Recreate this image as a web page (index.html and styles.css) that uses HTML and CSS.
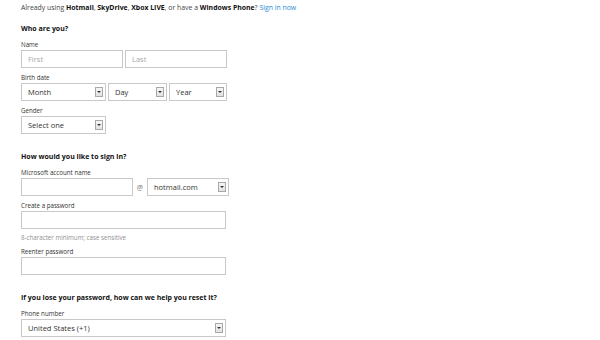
FILE: index.html
```html
<!DOCTYPE html>
<html lang="en">
<head>
    <meta charset="UTF-8">
    <title>Create an account</title>
    <link rel="stylesheet" href="styles.css">
</head>
<body>

    <p class="intro">Already using <b>Hotmail</b>, <b>SkyDrive</b>, <b>Xbox LIVE</b>, or have a <b>Windows Phone</b>? <a href="#">Sign in now</a></p>

    <!-- Who are you -->
    <section class="group">
        <h2>Who are you?</h2>
        <div class="field">
            <label>Name</label>
            <div class="row">
                <div class="input w101 placeholder">First</div>
                <div class="input w101 placeholder">Last</div>
            </div>
        </div>
        <div class="field">
            <label>Birth date</label>
            <div class="row">
                <div class="select w84">Month<span class="arrow"></span></div>
                <div class="select w58">Day<span class="arrow"></span></div>
                <div class="select w57">Year<span class="arrow"></span></div>
            </div>
        </div>
        <div class="field">
            <label>Gender</label>
            <div class="select w84">Select one<span class="arrow"></span></div>
        </div>
    </section>

    <!-- Sign in -->
    <section class="group">
        <h2>How would you like to sign in?</h2>
        <div class="field">
            <label>Microsoft account name</label>
            <div class="row">
                <div class="input w111"></div>
                <span class="at">@</span>
                <div class="select w81">hotmail.com<span class="arrow"></span></div>
            </div>
        </div>
        <div class="field">
            <label>Create a password</label>
            <div class="input wide"></div>
            <p class="hint">8-character minimum; case sensitive</p>
        </div>
        <div class="field">
            <label>Reenter password</label>
            <div class="input wide"></div>
        </div>
    </section>

    <!-- Reset -->
    <section class="group">
        <h2>If you lose your password, how can we help you reset it?</h2>
        <div class="field">
            <label>Phone number</label>
            <div class="select wide">United States (+1)<span class="arrow"></span></div>
        </div>
    </section>

</body>
</html>
```

FILE: styles.css
```css
body {
    margin: 0;
    padding: 3px 0 0 21px;
    font-family: "Open Sans", sans-serif;
    color: #222;
    background: #fff;
}
.intro {
    margin: 0;
    font-size: 6.9px;
    line-height: 10px;
    color: #444;
}
.intro b {
    color: #111;
}
.intro a {
    color: #2a8ad4;
    text-decoration: none;
}
.group {
    margin-top: 11px;
}
.group + .group {
    margin-top: 18px;
}
h2 {
    margin: 0 0 6px;
    font-size: 7px;
    line-height: 10px;
    font-weight: bold;
    color: #111;
}
.field {
    margin-bottom: 5px;
}
label {
    display: block;
    font-size: 6.2px;
    line-height: 9px;
    color: #333;
    margin-bottom: 1px;
}
.row {
    display: flex;
    align-items: center;
    gap: 2px;
}
.input, .select {
    box-sizing: border-box;
    height: 18px;
    border: 1px solid #c8c8c8;
    background: #fff;
    font-size: 7.5px;
    line-height: 16px;
    padding: 0 6px;
    color: #333;
}
.placeholder {
    color: #a8a8a8;
}
.select {
    display: flex;
    justify-content: space-between;
    align-items: center;
    padding-right: 2px;
}
.arrow {
    box-sizing: border-box;
    width: 8px;
    height: 10px;
    border: 1px solid #a8a8a8;
    background: linear-gradient(#f6f6f6, #e2e2e2);
    display: flex;
    justify-content: center;
    align-items: center;
}
.arrow::after {
    content: "";
    border-left: 2px solid transparent;
    border-right: 2px solid transparent;
    border-top: 2px solid #333;
}
.at {
    font-size: 7px;
    color: #777;
    width: 10px;
    text-align: center;
}
.w101 { width: 102px; }
.w84 { width: 85px; }
.w58 { width: 59px; }
.w57 { width: 58px; }
.w111 { width: 112px; }
.w81 { width: 82px; }
.wide { width: 205px; }
.hint {
    margin: 3.5px 0 0;
    font-size: 6.2px;
    line-height: 9px;
    color: #909090;
}
```
